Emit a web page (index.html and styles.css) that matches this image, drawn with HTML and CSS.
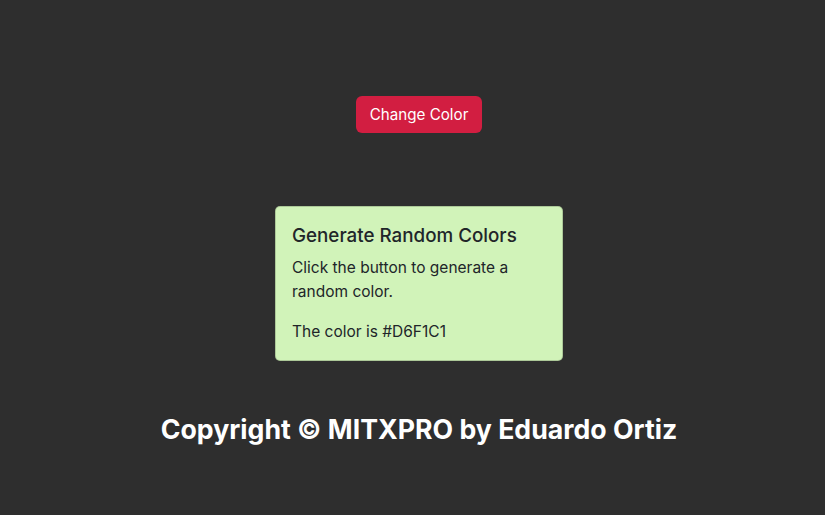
FILE: index.html
```html
<!DOCTYPE html>
<html>
<head>
<meta charset="utf-8">
<link rel="stylesheet" href="styles.css">
</head>
<body>
<main class="page">
  <button class="btn-change">Change Color</button>
  <div class="card">
    <div class="card-body">
      <h5 class="card-title">Generate Random Colors</h5>
      <p class="card-text">Click the button to generate a random color.</p>
      <p class="card-text">The color is #D6F1C1</p>
    </div>
  </div>
  <h1 class="footer">Copyright © MITXPRO by Eduardo Ortiz</h1>
</main>
</body>
</html>
```

FILE: styles.css
```css
html, body {
  margin: 0;
  padding: 0;
  background: #2e2e2e;
  font-family: Inter, "Noto Sans", sans-serif;
}
.page {
  display: flex;
  flex-direction: column;
  align-items: center;
  padding-top: 96px;
  padding-left: 13px;
}
.btn-change {
  background: #d21e41;
  color: #fff;
  border: none;
  border-radius: 6px;
  font-family: inherit;
  font-size: 15.2px;
  line-height: 24px;
  padding: 7px 14px 6px;
  cursor: pointer;
}
.card {
  margin-top: 73px;
  width: 286px;
  background: #d1f3b9;
  border: 1px solid rgba(0,0,0,0.175);
  border-radius: 5px;
  color: #212529;
}
.card-body {
  padding: 17px 16px 16px;
}
.card-title {
  margin: 0 0 8px;
  font-size: 18.8px;
  font-weight: 500;
  line-height: 24px;
}
.card-text {
  margin: 0 0 16px;
  font-size: 15.5px;
  line-height: 24px;
}
.card-text:last-child {
  margin-bottom: 0;
}
.footer {
  margin: 51px 0 0;
  color: #fff;
  font-size: 26.7px;
  font-weight: 700;
  line-height: 34px;
}
```
